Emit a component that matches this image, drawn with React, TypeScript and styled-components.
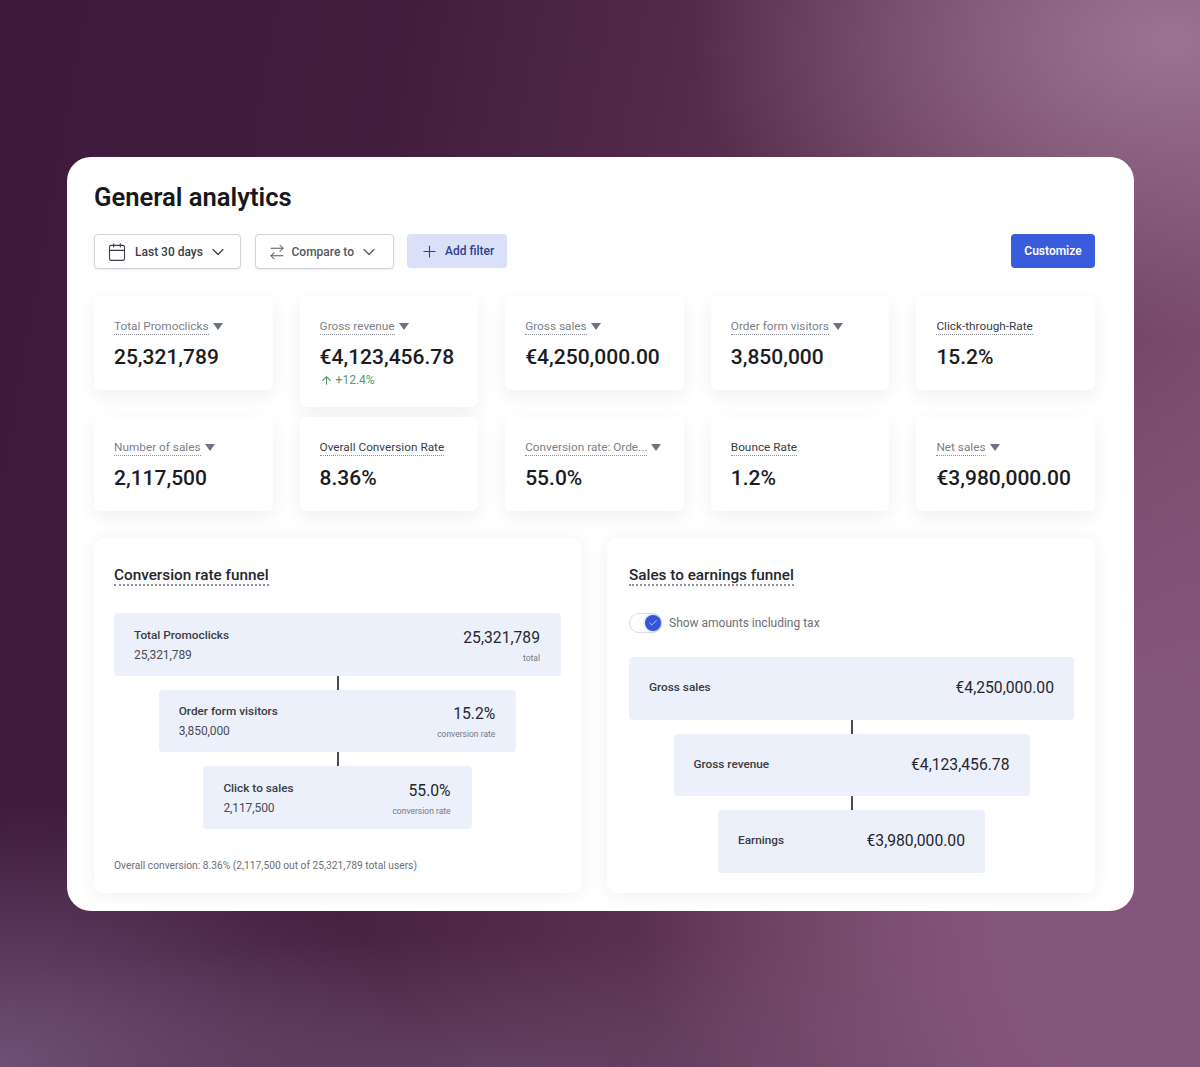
import React from 'react';
import styled, { createGlobalStyle } from 'styled-components';
import { Calendar, ArrowRightLeft, ChevronDown, Plus, ArrowUp, Check } from 'lucide-react';

const GlobalStyle = createGlobalStyle`
  html, body {
    margin: 0;
    padding: 0;
  }
  body {
    font-family: Roboto, "Liberation Sans", sans-serif;
    color: #1a1c22;
  }
  * { box-sizing: border-box; }
`;

const Page = styled.div`
  width: 1200px;
  height: 1067px;
  overflow: hidden;
  padding: 157px 66px 0 67px;
  background:
    radial-gradient(ellipse 480px 300px at 1170px 40px, #9c7392 0%, rgba(156, 115, 146, 0) 100%),
    radial-gradient(ellipse 560px 620px at 1200px 900px, #85567b 0%, #85567b 35%, rgba(133, 86, 123, 0) 100%),
    radial-gradient(ellipse 420px 260px at 0px 1067px, #6f4f75 0%, rgba(111, 79, 117, 0) 100%),
    radial-gradient(ellipse 700px 130px at 500px 1067px, rgba(104, 72, 104, 0.75) 0%, rgba(104, 72, 104, 0) 100%),
    linear-gradient(100deg, #3d1a3c 0%, #421e3d 30%, #5a304f 58%, #80506f 100%);
`;

const Panel = styled.main`
  height: 754px;
  padding: 24px 39px 18px 27px;
  background: #ffffff;
  border-radius: 24px;
`;

const Title = styled.h1`
  margin: 0 0 21px;
  font-size: 25.6px;
  line-height: 32px;
  font-weight: 600;
  color: #17181c;
`;

const Toolbar = styled.div`
  display: flex;
  align-items: flex-start;
  gap: 13.5px;
  height: 35px;
  margin-bottom: 27px;
`;

const SelectButton = styled.button<{ $width: number; $dim?: boolean }>`
  display: flex;
  align-items: center;
  width: ${p => p.$width}px;
  height: 35px;
  padding: 0 0 0 12px;
  background: #fff;
  border: 1px solid #d3d4d9;
  border-radius: 4px;
  box-shadow: 0 1px 2px rgba(30, 30, 50, 0.08);
  font: 500 12px Roboto, sans-serif;
  white-space: nowrap;
  color: ${p => (p.$dim ? '#55575f' : '#3b3d45')};

  svg {
    flex-shrink: 0;
  }
`;

const SelectLabel = styled.span<{ $gap: number }>`
  margin: 0 5px 0 ${p => p.$gap}px;
`;

const FilterButton = styled.button`
  display: flex;
  align-items: center;
  gap: 6px;
  width: 100px;
  height: 34px;
  padding: 0 0 0 13px;
  background: #d9e0f8;
  border: none;
  border-radius: 4px;
  font: 500 12px Roboto, sans-serif;
  white-space: nowrap;
  color: #2f3f8f;
`;

const CustomizeButton = styled.button`
  width: 84px;
  height: 34px;
  margin-left: auto;
  background: #3a5bdc;
  border: none;
  border-radius: 4px;
  font: 600 12px Roboto, sans-serif;
  color: #fff;
`;

const StatGrid = styled.div`
  display: grid;
  grid-template-columns: repeat(5, 1fr);
  column-gap: 27px;
  align-items: start;
  row-gap: 10px;
  margin-bottom: 27px;
`;

const StatCard = styled.div<{ $tall?: boolean }>`
  height: ${p => (p.$tall ? 111 : 94)}px;
  padding: 22px 20px 0;
  background: #fff;
  border-radius: 6px;
  box-shadow: 0 6px 18px rgba(40, 40, 70, 0.07);
`;

const LabelRow = styled.div`
  display: flex;
  align-items: center;
  gap: 4px;
  height: 17px;
`;

const StatLabel = styled.span<{ $strong?: boolean }>`
  font-size: 11.8px;
  line-height: 15px;
  white-space: nowrap;
  color: ${p => (p.$strong ? '#3a3c44' : '#7d7f88')};
  border-bottom: 1px dotted #8d8f98;
`;

const Caret = styled.span`
  width: 0;
  height: 0;
  border-left: 5.5px solid transparent;
  border-right: 5.5px solid transparent;
  border-top: 7px solid #6c7484;
`;

const StatValue = styled.div`
  margin-top: 8px;
  font-size: 21px;
  line-height: 28px;
  font-weight: 500;
  color: #1a1c22;
`;

const Trend = styled.div`
  display: flex;
  align-items: center;
  gap: 3px;
  margin-top: 1px;
  font-size: 12px;
  line-height: 16px;
  color: #4f9d6b;
`;

const FunnelGrid = styled.div`
  display: grid;
  grid-template-columns: 487px 488px;
  justify-content: space-between;
`;

const FunnelCard = styled.section<{ $right?: boolean }>`
  display: flex;
  flex-direction: column;
  height: 355px;
  padding: ${p => (p.$right ? '28px 21px 0 22px' : '28px 20px 0')};
  background: #fff;
  border-radius: 10px;
  box-shadow: 0 2px 18px rgba(40, 40, 70, 0.07);
`;

const FunnelTitle = styled.h2`
  align-self: flex-start;
  margin: 0;
  font-size: 15.3px;
  line-height: 18px;
  font-weight: 500;
  color: #26272d;
  border-bottom: 2px dotted #8d8f98;
`;

const ToggleRow = styled.div`
  display: flex;
  align-items: center;
  gap: 7px;
  margin-top: 26px;
  height: 22px;
  font-size: 12px;
  color: #6d6f78;
`;

const ToggleTrack = styled.div`
  display: flex;
  align-items: center;
  justify-content: flex-end;
  width: 33px;
  height: 20px;
  background: #fff;
  border: 1px solid #dcdde2;
  border-radius: 10px;
`;

const ToggleKnob = styled.div`
  display: flex;
  align-items: center;
  justify-content: center;
  width: 16px;
  height: 16px;
  background: #3356d8;
  border-radius: 50%;
  box-shadow: 0 0 3px rgba(51, 86, 216, 0.45);
  color: #cfd9ff;
`;

const Steps = styled.div<{ $top: number }>`
  display: flex;
  flex-direction: column;
  align-items: center;
  margin-top: ${p => p.$top}px;
`;

const Step = styled.div<{ $pct: number; $stacked?: boolean }>`
  display: flex;
  align-items: center;
  justify-content: space-between;
  width: ${p => p.$pct}%;
  height: 62.5px;
  padding: ${p => (p.$stacked ? '2px 21px 0 20px' : '0 20px 1px')};
  background: #ebf0fb;
  border-radius: 4px;
`;

const Connector = styled.div`
  width: 2px;
  height: 14px;
  background: #4a4c55;
`;

const StepName = styled.div`
  font-size: 11.8px;
  line-height: 17px;
  font-weight: 500;
  color: #3a3c44;
`;

const StepCount = styled.div`
  margin-top: 3px;
  font-size: 12px;
  line-height: 17px;
  letter-spacing: -0.1px;
  color: #4a4c55;
`;

const StepMetric = styled.div`
  text-align: right;
`;

const StepValue = styled.div`
  font-size: 15.7px;
  line-height: 21px;
  color: #26272d;
`;

const StepHint = styled.div`
  margin-top: 5px;
  font-size: 8.5px;
  line-height: 11px;
  color: #777983;
`;

const Footnote = styled.p`
  margin: 29px 0 0;
  font-size: 10.25px;
  line-height: 15px;
  color: #6d6f78;
`;

interface Stat {
  label: string;
  value: string;
  caret?: boolean;
  trend?: string;
}

const stats: Stat[] = [
  { label: 'Total Promoclicks', value: '25,321,789', caret: true },
  { label: 'Gross revenue', value: '€4,123,456.78', caret: true, trend: '+12.4%' },
  { label: 'Gross sales', value: '€4,250,000.00', caret: true },
  { label: 'Order form visitors', value: '3,850,000', caret: true },
  { label: 'Click-through-Rate', value: '15.2%' },
  { label: 'Number of sales', value: '2,117,500', caret: true },
  { label: 'Overall Conversion Rate', value: '8.36%' },
  { label: 'Conversion rate: Orde...', value: '55.0%', caret: true },
  { label: 'Bounce Rate', value: '1.2%' },
  { label: 'Net sales', value: '€3,980,000.00', caret: true },
];

const conversionSteps = [
  { name: 'Total Promoclicks', count: '25,321,789', value: '25,321,789', hint: 'total', pct: 100 },
  { name: 'Order form visitors', count: '3,850,000', value: '15.2%', hint: 'conversion rate', pct: 80 },
  { name: 'Click to sales', count: '2,117,500', value: '55.0%', hint: 'conversion rate', pct: 60 },
];

const earningSteps = [
  { name: 'Gross sales', value: '€4,250,000.00', pct: 100 },
  { name: 'Gross revenue', value: '€4,123,456.78', pct: 80 },
  { name: 'Earnings', value: '€3,980,000.00', pct: 60 },
];

const App: React.FC = () => (
  <Page>
    <GlobalStyle />
    <Panel>
      <Title>General analytics</Title>
      <Toolbar>
        <SelectButton $width={147}>
          <Calendar size={20} strokeWidth={1.3} />
          <SelectLabel $gap={8}>Last 30 days</SelectLabel>
          <ChevronDown size={20} strokeWidth={1.4} />
        </SelectButton>
        <SelectButton $width={139} $dim>
          <ArrowRightLeft size={18} strokeWidth={1.4} />
          <SelectLabel $gap={6}>Compare to</SelectLabel>
          <ChevronDown size={20} strokeWidth={1.4} />
        </SelectButton>
        <FilterButton>
          <Plus size={19} strokeWidth={1.4} />
          Add filter
        </FilterButton>
        <CustomizeButton>Customize</CustomizeButton>
      </Toolbar>

      <StatGrid>
        {stats.map(stat => (
          <StatCard key={stat.label} $tall={!!stat.trend}>
            <LabelRow>
              <StatLabel $strong={!stat.caret}>{stat.label}</StatLabel>
              {stat.caret && <Caret />}
            </LabelRow>
            <StatValue>{stat.value}</StatValue>
            {stat.trend && (
              <Trend>
                <ArrowUp size={13} />
                {stat.trend}
              </Trend>
            )}
          </StatCard>
        ))}
      </StatGrid>

      <FunnelGrid>
        <FunnelCard>
          <FunnelTitle>Conversion rate funnel</FunnelTitle>
          <Steps $top={27}>
            {conversionSteps.map((step, i) => (
              <React.Fragment key={step.name}>
                {i > 0 && <Connector />}
                <Step $pct={step.pct} $stacked>
                  <div>
                    <StepName>{step.name}</StepName>
                    <StepCount>{step.count}</StepCount>
                  </div>
                  <StepMetric>
                    <StepValue>{step.value}</StepValue>
                    <StepHint>{step.hint}</StepHint>
                  </StepMetric>
                </Step>
              </React.Fragment>
            ))}
          </Steps>
          <Footnote>Overall conversion: 8.36% (2,117,500 out of 25,321,789 total users)</Footnote>
        </FunnelCard>

        <FunnelCard $right>
          <FunnelTitle>Sales to earnings funnel</FunnelTitle>
          <ToggleRow>
            <ToggleTrack>
              <ToggleKnob>
                <Check size={10} strokeWidth={2} />
              </ToggleKnob>
            </ToggleTrack>
            Show amounts including tax
          </ToggleRow>
          <Steps $top={23}>
            {earningSteps.map((step, i) => (
              <React.Fragment key={step.name}>
                {i > 0 && <Connector />}
                <Step $pct={step.pct}>
                  <StepName>{step.name}</StepName>
                  <StepValue>{step.value}</StepValue>
                </Step>
              </React.Fragment>
            ))}
          </Steps>
        </FunnelCard>
      </FunnelGrid>
    </Panel>
  </Page>
);

export default App;
